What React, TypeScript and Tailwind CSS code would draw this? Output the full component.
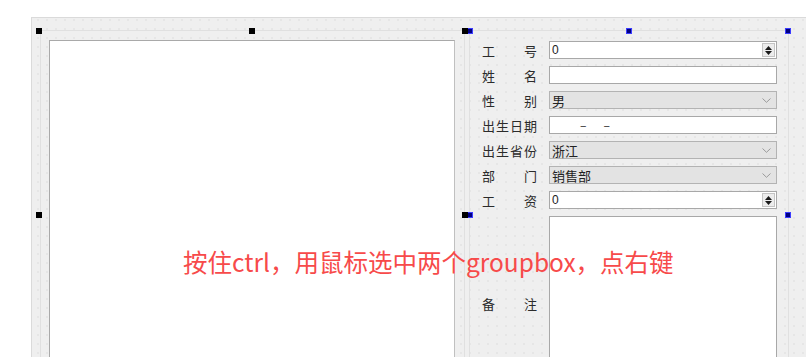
import React from "react";

const cjk = { fontFamily: '"Noto Sans CJK SC", "Noto Sans", sans-serif' };

function Label({ chars }: { chars: string[] }) {
  return (
    <div className="flex w-[55px] shrink-0 justify-between text-[13px] leading-none text-[#2b2b2b]">
      {chars.map((c, i) => (
        <span key={i}>{c}</span>
      ))}
    </div>
  );
}

function SpinBox({ value }: { value: string }) {
  return (
    <div className="flex h-[18px] flex-1 items-center border border-[#a8a8a8] bg-white pl-[2px] text-[12px] leading-none text-[#222]">
      <span className="flex-1" style={{ fontFamily: '"Liberation Sans", sans-serif' }}>
        {value}
      </span>
      <div className="mr-[1px] flex h-[14px] w-[13px] flex-col items-center justify-center gap-[1px] border border-[#c4c4c4] bg-[#ececec]">
        <svg width="7" height="4" viewBox="0 0 7 4">
          <path d="M0 4 L3.5 0 L7 4 Z" fill="#1a1a1a" />
        </svg>
        <svg width="7" height="4" viewBox="0 0 7 4">
          <path d="M0 0 L3.5 4 L7 0 Z" fill="#1a1a1a" />
        </svg>
      </div>
    </div>
  );
}

function Combo({ value }: { value: string }) {
  return (
    <div className="flex h-[18px] flex-1 items-center border border-[#b3b3b3] bg-[#e3e3e3] pl-[2px] text-[13px] leading-none text-[#222]">
      <span className="flex-1">{value}</span>
      <svg width="9" height="5" viewBox="0 0 9 5" className="mr-[5px]">
        <path d="M0.5 0.5 L4.5 4.3 L8.5 0.5" fill="none" stroke="#9a9a9a" strokeWidth="1" />
      </svg>
    </div>
  );
}

function Row({ label, children }: { label: string[]; children: React.ReactNode }) {
  return (
    <div className="flex h-[18px] items-center gap-[12px]">
      <Label chars={label} />
      {children}
    </div>
  );
}

function Handle({ x, y, blue }: { x: number; y: number; blue?: boolean }) {
  return (
    <div
      className={
        blue
          ? "absolute h-[6px] w-[6px] border border-[#3b3bff] bg-[#000080]"
          : "absolute h-[6px] w-[6px] bg-black"
      }
      style={{ left: x, top: y }}
    />
  );
}

export default function App() {
  return (
    <div className="relative h-[357px] w-[811px] overflow-hidden bg-white" style={cjk}>
      <div className="ml-[31px] mt-[17px] h-[360px] w-[775px] border-l border-t border-[#dadada] bg-[#efefef] [background-image:radial-gradient(circle,#cacaca_0.8px,transparent_1px)] [background-position:1.5px_-2.5px] [background-size:9px_9px]">
        <div className="flex gap-[4px] pl-[8px] pt-[12px]">
          {/* left group box */}
          <div className="h-[380px] w-[425px] border-l border-r border-t border-[#e0e0e0] pl-[8px] pr-[9px] pt-[9px]">
            <div className="h-[360px] w-full border border-[#a9a9a9] border-r-[#c0c0c0] bg-white" />
          </div>

          {/* right group box */}
          <div className="flex h-[380px] w-[320px] flex-col gap-[7px] border-l border-r border-t border-[#e0e0e0] pl-[12px] pr-[11px] pt-[10px]">
            <Row label={["工", "号"]}>
              <SpinBox value="0" />
            </Row>
            <Row label={["姓", "名"]}>
              <div className="h-[18px] flex-1 border border-[#a8a8a8] bg-white" />
            </Row>
            <Row label={["性", "别"]}>
              <Combo value="男" />
            </Row>
            <Row label={["出", "生", "日", "期"]}>
              <div className="flex h-[18px] flex-1 items-center border border-[#a8a8a8] bg-white text-[12px] leading-none text-[#222]">
                <span className="ml-[30px]">–</span>
                <span className="ml-[17px]">–</span>
              </div>
            </Row>
            <Row label={["出", "生", "省", "份"]}>
              <Combo value="浙江" />
            </Row>
            <Row label={["部", "门"]}>
              <Combo value="销售部" />
            </Row>
            <Row label={["工", "资"]}>
              <SpinBox value="0" />
            </Row>
            <div className="flex h-[174px] items-center gap-[12px]">
              <Label chars={["备", "注"]} />
              <div className="h-full flex-1 border border-[#a8a8a8] bg-white" />
            </div>
          </div>
        </div>
      </div>

      {/* selection handles */}
      <Handle x={36} y={28} />
      <Handle x={249} y={28} />
      <Handle x={36} y={212} />
      <Handle x={467} y={28} blue />
      <Handle x={462} y={28} />
      <Handle x={467} y={212} blue />
      <Handle x={462} y={212} />
      <Handle x={626} y={28} blue />
      <Handle x={785} y={28} blue />
      <Handle x={785} y={212} blue />

      {/* caption */}
      <div className="absolute left-[183px] top-[246px] whitespace-nowrap text-[24.5px] leading-[32px] text-[#f74a4a]">
        按住ctrl，用鼠标选中两个groupbox，点右键
      </div>
    </div>
  );
}
